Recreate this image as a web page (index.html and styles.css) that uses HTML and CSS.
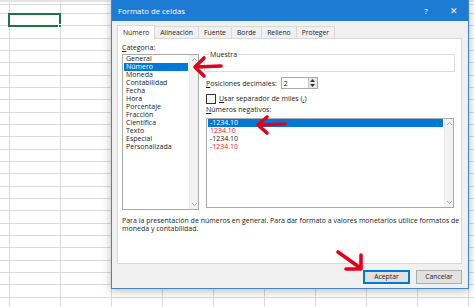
FILE: index.html
```html
<!DOCTYPE html>
<html lang="es">
<head>
    <meta charset="UTF-8">
    <title>Formato de celdas</title>
    <link rel="stylesheet" href="styles.css">
</head>
<body>
<div class="sheet">
    <div class="cell-active"><span class="handle"></span></div>
</div>

<div class="dialog">
    <div class="titlebar">
        <span class="title">Formato de celdas</span>
        <span class="help">?</span>
        <span class="close">&#x2715;</span>
    </div>
    <div class="body">
        <div class="tabs">
            <span class="tab current">Número</span>
            <span class="tab">Alineación</span>
            <span class="tab">Fuente</span>
            <span class="tab">Borde</span>
            <span class="tab">Relleno</span>
            <span class="tab">Proteger</span>
        </div>
        <div class="panel">
            <div class="columns">
                <div class="col-left">
                    <div class="label"><u>C</u>ategoría:</div>
                    <div class="listbox cat">
                        <ul>
                            <li>General</li>
                            <li class="sel">Número</li>
                            <li>Moneda</li>
                            <li>Contabilidad</li>
                            <li>Fecha</li>
                            <li>Hora</li>
                            <li>Porcentaje</li>
                            <li>Fracción</li>
                            <li>Científica</li>
                            <li>Texto</li>
                            <li>Especial</li>
                            <li>Personalizada</li>
                        </ul>
                        <div class="scrollbar">
                            <svg width="7" height="5" viewBox="0 0 7 5"><polyline points="1,4 3.5,1.5 6,4" /></svg>
                            <svg width="7" height="5" viewBox="0 0 7 5"><polyline points="1,1 3.5,3.5 6,1" /></svg>
                        </div>
                    </div>
                </div>
                <div class="col-right">
                    <div class="sample"><span class="legend">Muestra</span></div>
                    <div class="row decimals">
                        <span><u>P</u>osiciones decimales:</span>
                        <div class="spin">
                            <span class="spin-value">2</span>
                            <span class="spin-btns">
                                <svg width="5" height="3" viewBox="0 0 5 3"><polygon points="0,3 2.5,0 5,3" /></svg>
                                <svg width="5" height="3" viewBox="0 0 5 3"><polygon points="0,0 2.5,3 5,0" /></svg>
                            </span>
                        </div>
                    </div>
                    <div class="row check">
                        <span class="box"></span>
                        <span><u>U</u>sar separador de miles (<u>.</u>)</span>
                    </div>
                    <div class="label"><u>N</u>úmeros negativos:</div>
                    <div class="listbox neg">
                        <ul>
                            <li class="sel">-1234.10</li>
                            <li class="red">1234.10</li>
                            <li>-1234.10</li>
                            <li class="red">-1234.10</li>
                        </ul>
                        <div class="scrollbar">
                            <svg width="7" height="5" viewBox="0 0 7 5"><polyline points="1,4 3.5,1.5 6,4" /></svg>
                            <svg width="7" height="5" viewBox="0 0 7 5"><polyline points="1,1 3.5,3.5 6,1" /></svg>
                        </div>
                    </div>
                </div>
            </div>
            <p class="desc">Para la presentación de números en general. Para dar formato a valores monetarios utilice formatos de moneda y contabilidad.</p>
        </div>
        <div class="buttons">
            <span class="btn default">Aceptar</span>
            <span class="btn">Cancelar</span>
        </div>
    </div>
</div>

<!-- flechas rojas de la captura -->
<svg class="marks" width="474" height="307" viewBox="0 0 474 307">
    <g class="arrow">
        <path d="M221 66 L196 67 M204 58 L195 67 L204 76" />
        <path d="M285 124 L259 125 M267 117 L258 125 L267 133" />
        <path d="M338 252 L359 267 M361 255 L361 269 L346 269" />
    </g>
</svg>
</body>
</html>
```

FILE: styles.css
```css
* {
    margin: 0;
    padding: 0;
    box-sizing: border-box;
}

body {
    width: 474px;
    height: 307px;
    overflow: hidden;
    position: relative;
    font-family: "Open Sans", "Noto Sans", sans-serif;
    color: #1a1a1a;
    background: #fff;
}

ul {
    list-style-type: none;
}

/* hoja de excel de fondo */
.sheet {
    height: 307px;
    border-top: 2px solid #e4e4e4;
    background-image:
        repeating-linear-gradient(to right, #dadada 0 1px, transparent 1px 51px),
        repeating-linear-gradient(to bottom, #dadada 0 1px, transparent 1px 12.33px);
    background-position: 9px 0, 0 11px;
}

.cell-active {
    position: absolute;
    left: 8px;
    top: 13px;
    width: 53px;
    height: 14px;
    border: 2px solid #217346;
}

.handle {
    position: absolute;
    right: -3px;
    bottom: -3px;
    width: 4px;
    height: 4px;
    background: #217346;
    border: 1px solid #fff;
}

/* ventana de dialogo */
.dialog {
    position: absolute;
    left: 111px;
    top: -1px;
    width: 358px;
    height: 290px;
    border: 1px solid #3e86cc;
    background: #f0f0f0;
    box-shadow: 0 2px 9px rgba(0, 0, 0, .28);
    display: flex;
    flex-direction: column;
}

.titlebar {
    height: 21px;
    background: #1e7bd3;
    color: #fff;
    display: flex;
    align-items: center;
    padding-left: 6px;
    font-size: 7.8px;
}

.title {
    flex: 1;
}

.help {
    width: 28px;
    text-align: center;
    font-size: 8px;
}

.close {
    width: 28px;
    text-align: center;
    font-size: 9px;
}

.body {
    flex: 1;
    padding: 4px 6px 4px 5px;
    display: flex;
    flex-direction: column;
}

.tabs {
    display: flex;
    align-items: flex-end;
    height: 13px;
    font-size: 6.8px;
}

.tab {
    height: 12px;
    line-height: 11px;
    padding: 0 5px;
    border: 1px solid #d9d9d9;
    border-bottom: none;
    border-left: none;
    background: #f0f0f0;
    color: #222;
}

.tab.current {
    height: 14px;
    line-height: 14px;
    margin-bottom: -1px;
    background: #fff;
    border-left: 1px solid #d9d9d9;
    position: relative;
    z-index: 1;
}

.panel {
    height: 226px;
    background: #fff;
    border: 1px solid #d9d9d9;
    padding: 5px 4px 0 4px;
    font-size: 7px;
}

.columns {
    display: flex;
    gap: 5px;
}

.col-left {
    width: 77px;
}

.col-right {
    flex: 1;
}

.label {
    height: 8px;
    line-height: 8px;
    margin-bottom: 2px;
}

.listbox {
    border: 1px solid #a9a9a9;
    display: flex;
    background: #fff;
}

.listbox ul {
    flex: 1;
    padding: 0 1px;
}

.listbox li {
    height: 8px;
    line-height: 8px;
    padding-left: 2px;
}

.listbox li.sel {
    background: #0078d7;
    color: #fff;
}

.listbox li.red {
    color: #f0222e;
}

.scrollbar {
    width: 9px;
    background: #f2f2f2;
    border-left: 1px solid #ececec;
    display: flex;
    flex-direction: column;
    justify-content: space-between;
    align-items: center;
    padding: 2px 0;
}

.scrollbar polyline {
    fill: none;
    stroke: #a6a6a6;
    stroke-width: 1;
}

.cat {
    height: 156px;
}

.neg {
    height: 90px;
    margin-left: 2px;
    margin-right: 3px;
}

.sample {
    margin-top: 10px;
    height: 18px;
    border: 1px solid #dcdcdc;
    margin-right: 2px;
    position: relative;
}

.legend {
    position: absolute;
    top: -5px;
    left: 4px;
    background: #fff;
    padding: 0 1px;
    line-height: 9px;
}

.row {
    display: flex;
    align-items: center;
    padding-left: 2px;
}

.decimals {
    margin-top: 5px;
    height: 12px;
    gap: 4px;
}

.spin {
    width: 37px;
    height: 12px;
    border: 1px solid #a9a9a9;
    display: flex;
    align-items: center;
}

.spin-value {
    flex: 1;
    padding-left: 2px;
}

.spin-btns {
    width: 9px;
    height: 10px;
    border-left: 1px solid #c8c8c8;
    background: #e8e8e8;
    display: flex;
    flex-direction: column;
    justify-content: space-around;
    align-items: center;
}

.spin-btns polygon {
    fill: #333;
}

.check {
    margin-top: 4px;
    height: 11px;
    gap: 3px;
}

.box {
    width: 10px;
    height: 10px;
    border: 1px solid #333;
    background: #fff;
}

.check + .label {
    margin-top: 2px;
    margin-bottom: 4px;
    padding-left: 2px;
}

.desc {
    margin-top: 7px;
    line-height: 8px;
    width: 340px;
}

.buttons {
    display: flex;
    justify-content: flex-end;
    gap: 6px;
    margin-top: 6px;
    font-size: 6.8px;
}

.btn {
    width: 46px;
    height: 14px;
    line-height: 12px;
    text-align: center;
    background: #e1e1e1;
    border: 1px solid #adadad;
}

.btn.default {
    width: 47px;
    border: 2px solid #0078d7;
    line-height: 10px;
}

/* anotaciones */
.marks {
    position: absolute;
    left: 0;
    top: 0;
    pointer-events: none;
}

.arrow path {
    fill: none;
    stroke: #e3001b;
    stroke-width: 3.6;
    stroke-linecap: round;
    stroke-linejoin: round;
}
```
